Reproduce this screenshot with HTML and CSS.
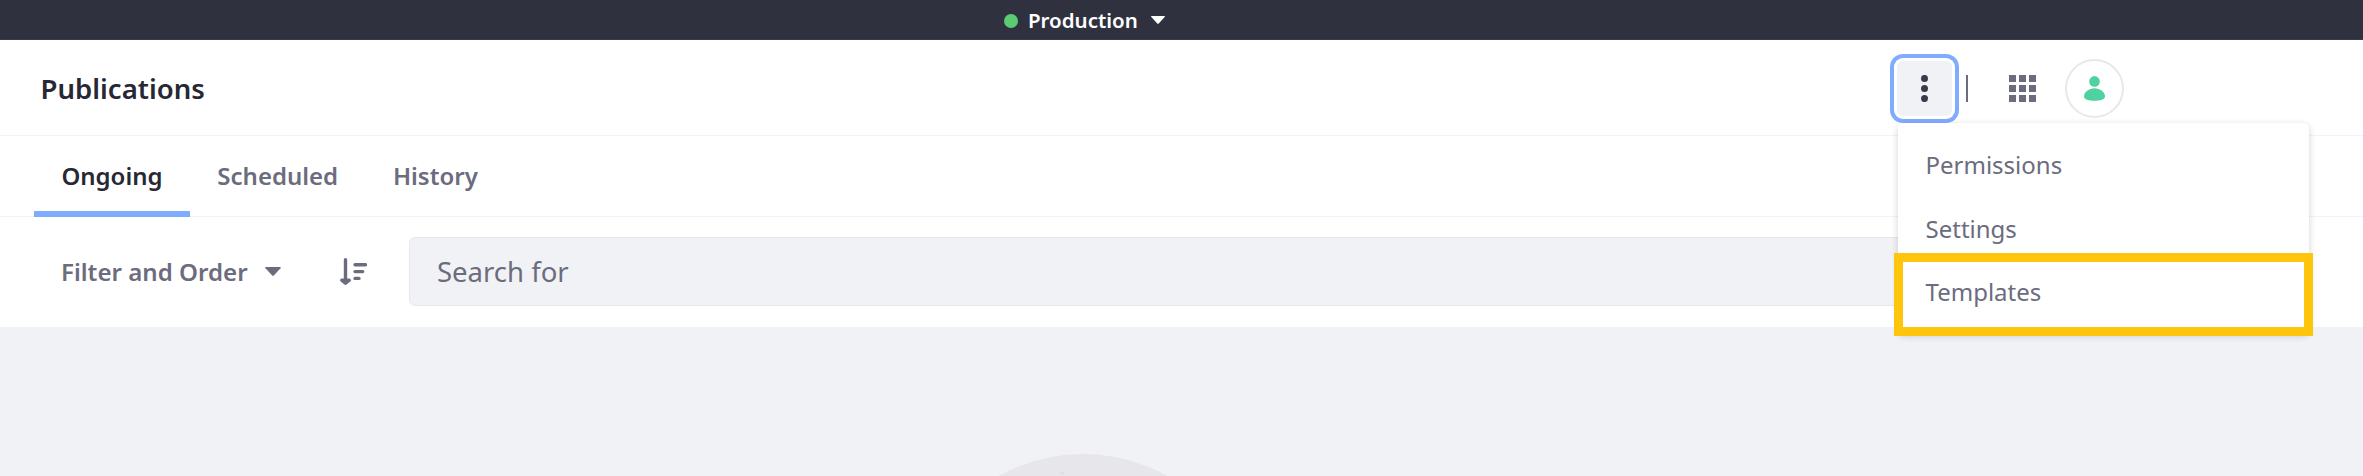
FILE: index.html
```html
<!DOCTYPE html>
<html lang="en">
<head>
<meta charset="utf-8">
<title>Publications</title>
<link rel="stylesheet" href="styles.css">
</head>
<body>
<div class="env-bar">
  <span class="status-dot"></span>
  <span class="env-name">Production</span>
  <svg class="env-caret" viewBox="0 0 14 8"><path d="M.5 0h13q.8.4.2 1L7.7 7.6q-.7.6-1.4 0L.3 1Q-.3.4.5 0z"/></svg>
</div>
<header class="header">
  <h1 class="title">Publications</h1>
  <div class="actions">
    <div class="menu-anchor">
      <button class="kebab" aria-label="Options">
        <svg width="27" height="27" viewBox="0 0 27 27"><circle cx="13.5" cy="3.4" r="3.5"/><circle cx="13.5" cy="13.5" r="3.5"/><circle cx="13.5" cy="23.6" r="3.5"/></svg>
      </button>
      <div class="menu">
        <a class="menu-item">Permissions</a>
        <a class="menu-item">Settings</a>
        <a class="menu-item">Templates</a>
        <div class="highlight"></div>
      </div>
    </div>
    <span class="divider"></span>
    <svg class="grid-icon" viewBox="0 0 27 27"><path d="M0 0h7v7H0zM10 0h7v7h-7zM20 0h7v7h-7zM0 10h7v7H0zM10 10h7v7h-7zM20 10h7v7h-7zM0 20h7v7H0zM10 20h7v7h-7zM20 20h7v7h-7z"/></svg>
    <span class="avatar">
      <svg width="21" height="25" viewBox="0 0 21 25"><circle cx="10.5" cy="5.4" r="5.3"/><path d="M10.5 12.2C16 12.2 21 16 21 20.4c0 3.200-5 4.300-10.500 4.300S0 23.600 0 20.400C0 16 5 12.200 10.500 12.200z"/></svg>
    </span>
  </div>
</header>
<nav class="tabs">
  <a class="tab active">Ongoing</a>
  <a class="tab">Scheduled</a>
  <a class="tab">History</a>
</nav>
<div class="toolbar">
  <span class="filter">Filter and Order</span>
  <svg class="filter-caret" viewBox="0 0 16 9"><path d="M.8 0h14.400q1 .4.3 1.200L8.800 8.500q-.8.700-1.600 0L.5 1.200Q-.2.400.8 0z"/></svg>
  <svg class="sort-icon" viewBox="0 0 27 27"><path d="M5.500 1.800V22M1.800 22.200l3.700 3L9.200 22.200zM15 6.800h10.500M15 13.600h7.700M15 20.400h4"/></svg>
  <div class="search">Search for</div>
</div>
<main class="content"><div class="illustration"></div></main>
</body>
</html>
```
FILE: styles.css
```css
* { box-sizing: border-box; }
body {
  margin: 0;
  height: 476px;
  overflow: hidden;
  display: flex;
  flex-direction: column;
  background: #f1f2f5;
  color: #6b6c7e;
  font-family: "Noto Sans", sans-serif;
}
svg { display: block; flex: none; fill: currentColor; }
.env-bar {
  height: 40px;
  flex: none;
  display: flex;
  align-items: center;
  padding-left: 1004px;
  background: #30313f;
  border-bottom: 1px solid #393a4a;
  color: #fff;
}
.status-dot { width: 14px; height: 14px; margin-top: 2px; border-radius: 50%; background: #5aca75; }
.env-name { width: 123px; margin-left: 10px; margin-bottom: 0; margin-top: 1px; font-size: 20.5px; font-weight: 600; line-height: 27px; }
.env-caret { width: 14px; height: 8px; margin-top: 1px; }
.header {
  height: 96px;
  flex: none;
  display: flex;
  justify-content: space-between;
  padding: 0 239px 0 40px;
  background: #fff;
  border-bottom: 1px solid #f1f2f5;
}
.title { margin: 0; padding-left: .6px; color: #272833; font-size: 27.5px; font-weight: 600; line-height: 97px; }
.actions { display: flex; align-items: center; height: 97px; }
.menu-anchor { position: relative; }
.kebab {
  width: 55px;
  height: 55px;
  padding: 0;
  display: grid;
  place-items: center;
  border: 0;
  border-radius: 6px;
  background: #f1f2f5;
  color: #393a4a;
  box-shadow: 0 0 0 3px #fff, 0 0 0 7px #80acff;
}
.menu {
  position: absolute;
  z-index: 2;
  top: 62px;
  left: 1px;
  width: 411px;
  height: 211px;
  padding: 10px 27.5px;
  border-radius: 6px;
  background: #fff;
  box-shadow: 0 2px 7px rgba(39, 40, 51, .2);
}
.menu-item { display: block; font-size: 24px; line-height: 63.5px; }
.highlight {
  position: absolute;
  left: -4.5px;
  top: 129.5px;
  width: 419.4px;
  height: 83px;
  border: 9px solid #ffc40c;
}
.divider { width: 2px; height: 27px; margin-left: 14px; background: #6b6c7e; }
.grid-icon { width: 27px; height: 27px; margin-left: 41px; }
.avatar {
  width: 59px;
  height: 59px;
  margin-left: 29px;
  display: grid;
  place-items: center;
  border: 2px solid #e7e7ed;
  border-radius: 50%;
  color: #50d2a0;
}
.tabs {
  height: 81px;
  flex: none;
  display: flex;
  padding-left: 34px;
  background: #fff;
  border-bottom: 1px solid #f1f2f5;
}
.tab { height: 81px; padding: 0 27.4px; font-size: 24px; font-weight: 600; line-height: 79px; }
.active { color: #272833; border-bottom: 6px solid #80acff; }
.toolbar {
  height: 110px;
  flex: none;
  display: flex;
  align-items: center;
  padding: 0 0 1px 61px;
  background: #fff;
}
.filter { width: 187px; font-size: 24.1px; font-weight: 600; white-space: nowrap; }
.filter-caret { width: 16px; height: 9px; margin-left: 17px; }
.sort-icon {
  width: 27px;
  height: 27px;
  margin-left: 59px;
  stroke: currentColor;
  stroke-width: 3.4px;
  stroke-linecap: round;
  stroke-linejoin: round;
}
.search {
  width: 1760px;
  height: 69px;
  margin-left: 42px;
  padding-left: 27px;
  border: 1px solid #e7e7ed;
  border-radius: 6px;
  background: #f1f2f5;
  font-size: 27.5px;
  line-height: 67px;
}
.content { flex: 1; overflow: hidden; padding: 127px 0 0 911px; }
.illustration { width: 344px; height: 344px; border-radius: 50%; background: radial-gradient(circle 2px at 151px 19px, #dfdfe4 99%, #e7e6eb); }
```
